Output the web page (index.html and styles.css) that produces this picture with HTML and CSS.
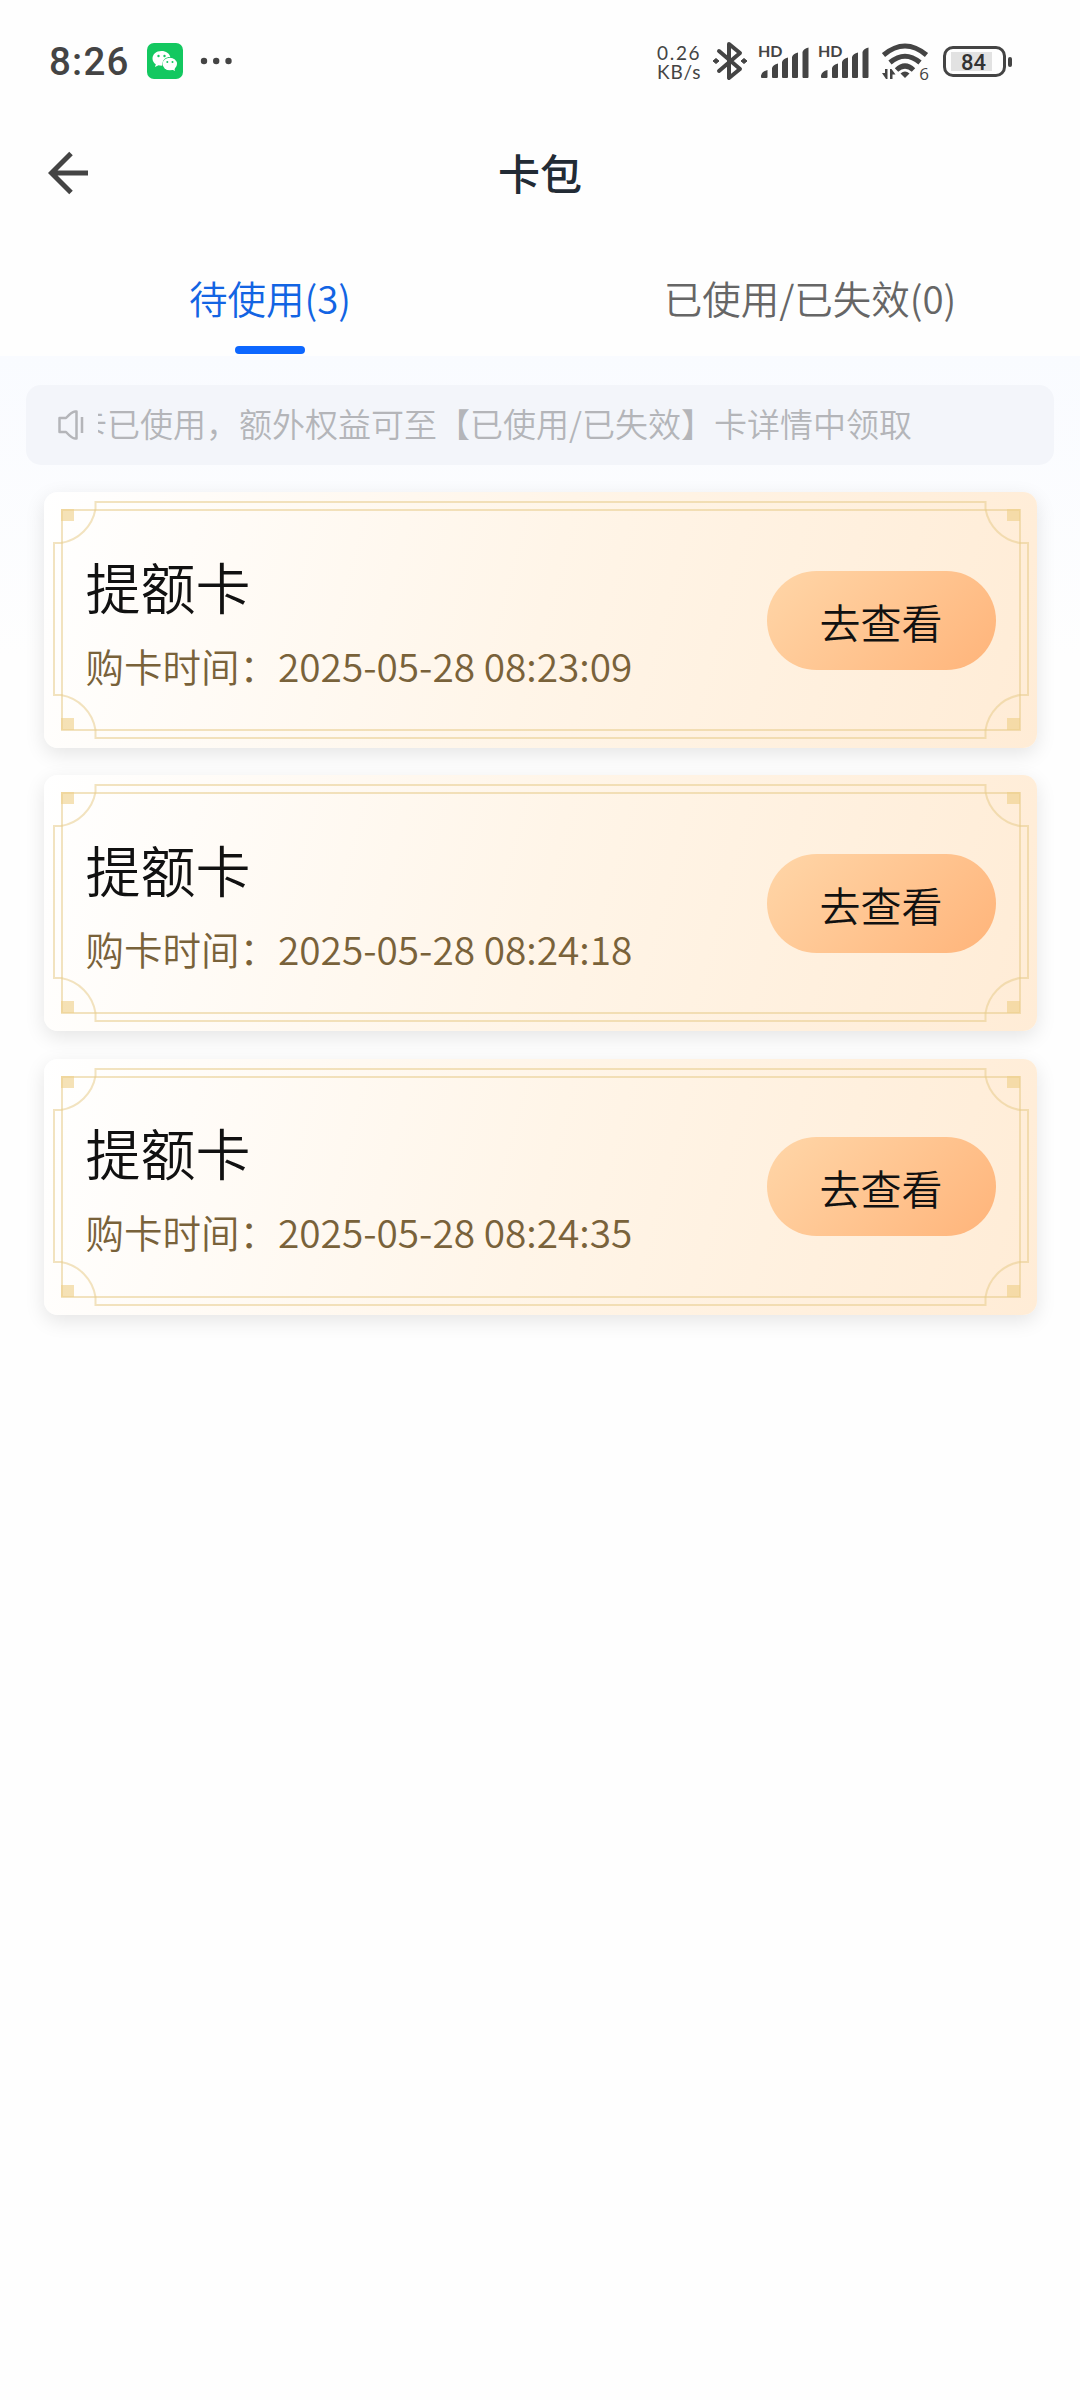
FILE: index.html
```html
<!DOCTYPE html>
<html lang="zh-CN">
<head>
<meta charset="utf-8">
<title>卡包</title>
<link rel="stylesheet" href="styles.css">
</head>
<body>
<svg class="defs" width="0" height="0" aria-hidden="true">
  <symbol id="frame" viewBox="0 0 993 256">
    <g fill="none" stroke="#e8cc8c" stroke-opacity=".55" stroke-width="2">
      <rect x="18" y="18" width="958" height="220"/>
      <path d="M51.500 10H941.500V17A42 42 0 0 0 976 51H984V203H976A42 42 0 0 0 941.500 238V246H51.500V238A42 42 0 0 0 17 203H10V51H17A42 42 0 0 0 51.500 17Z"/>
    </g>
    <path fill="#efcf87" fill-opacity=".6" d="M17 17h13v12H17zM963 17h13v12h-13zM17 226h13v12H17zM963 226h13v12h-13z"/>
  </symbol>
  <symbol id="signal" viewBox="0 0 48 31">
    <path d="M0 30v-1.500Q1 24 6.500 23V30q0 1-1 1H1q-1 0-1-1zM11 30V21q1-3.500 6-4.500V30q0 1-1 1h-4q-1 0-1-1zM21 30V15q1-3.500 6-4.500V30q0 1-1 1h-4q-1 0-1-1zM31 30V10q1-3.500 6-4.500V30q0 1-1 1h-4q-1 0-1-1zM41.500 30V5q1-3.500 6-4.500V30q0 1-1 1h-4q-1 0-1-1z"/>
  </symbol>
</svg>
<header class="status">
  <time class="clock">8:26</time>
  <svg class="wechat" viewBox="0 0 36 36" width="36" height="36">
    <rect width="36" height="36" rx="7" fill="#13c860"/>
    <path fill="#fff" d="M14.500 8C9 8 5.500 11.500 5.500 15.500c0 2.500 1.300 4.500 3.300 5.800L8 24l3.500-1.800c1 .3 2.500.5 3.800.4C15 16.500 19 14 23.300 14 22.500 10.500 19 8 14.500 8z"/>
    <ellipse cx="22.800" cy="21" rx="7.200" ry="6.300" fill="#fff"/><path fill="#fff" d="M24 26l4 2-1-4z"/>
    <g fill="#13c860"><circle cx="11.500" cy="13" r="1.200"/><circle cx="17.500" cy="13" r="1.200"/><circle cx="20.300" cy="19" r="1"/><circle cx="25.500" cy="19" r="1"/></g>
  </svg>
  <svg class="dots" viewBox="0 0 32 8" width="32" height="8"><circle cx="4" cy="4" r="3.200"/><circle cx="16.200" cy="4" r="3.200"/><circle cx="28.500" cy="4" r="3.200"/></svg>
  <div class="rate"><span class="num">0.26</span><span>KB/s</span></div>
  <svg class="bt" viewBox="0 0 36 40" width="36" height="40"><path d="M7 10 28 28 17 37V3L28 12 7 30" fill="none" stroke="#444" stroke-width="4" stroke-linejoin="round" stroke-linecap="round"/><path d="M1 20l3-2.500 3 2.500-3 2.500zM29 20l3-2.500 3 2.500-3 2.500z" stroke="#444" stroke-linejoin="round"/></svg>
  <div class="sim"><span>HD</span><svg width="48" height="31"><use href="#signal"/></svg></div>
  <div class="sim second"><span>HD</span><svg width="48" height="31"><use href="#signal"/></svg></div>
  <div class="wifi">
    <svg viewBox="0 0 48 36" width="48" height="36"><g fill="none" stroke="#444" stroke-width="5"><path d="M1.500 12Q23 -6 44.500 12"/><path d="M8 19.500Q23 7 38 19.500"/><path d="M14.500 27Q23 19 31.500 27"/></g><path d="M18.500 30.500q4.500-4 9 0L23 35z"/><path d="M0 30h3v-4h2.500v10H4zM8 36V26h1.500l4 5.500h-3V36z"/></svg>
    <span>6</span>
  </div>
  <div class="battery"><span>84</span></div>
</header>
<nav class="titlebar">
  <svg class="back" viewBox="0 0 40 44" width="40" height="44"><path d="M23 2.500 3.500 22 23 41.500M4 22h36" fill="none" stroke="#444" stroke-width="5"/></svg>
  <h1>卡包</h1>
</nav>
<div class="tabs">
  <div class="tab active">待使用(3)</div>
  <div class="tab">已使用/已失效(0)</div>
</div>
<main>
  <div class="notice">
    <svg class="horn" viewBox="0 0 26 30" width="26" height="30"><path d="M1.500 8h6.500q6-6.500 9-6.500h1.500v27H17q-3 0-9-6.500H1.500zM24 7v16" fill="none" stroke="#b4b5b9" stroke-width="2.500" stroke-linejoin="round"/></svg>
    <div class="ticker"><span>卡已使用，额外权益可至【已使用/已失效】卡详情中领取</span></div>
  </div>
  <section class="card">
    <svg class="frame"><use href="#frame"/></svg>
    <div class="info"><h2>提额卡</h2><p>购卡时间：<span>2025-05-28 08:23:09</span></p></div>
    <button>去查看</button>
  </section>
  <section class="card">
    <svg class="frame"><use href="#frame"/></svg>
    <div class="info"><h2>提额卡</h2><p>购卡时间：<span>2025-05-28 08:24:18</span></p></div>
    <button>去查看</button>
  </section>
  <section class="card">
    <svg class="frame"><use href="#frame"/></svg>
    <div class="info"><h2>提额卡</h2><p>购卡时间：<span>2025-05-28 08:24:35</span></p></div>
    <button>去查看</button>
  </section>
</main>
</body>
</html>
```
FILE: styles.css
```css
* { box-sizing: border-box; }
body { margin: 0; width: 1080px; height: 2400px; background: #fefefe; font-family: "Noto Sans CJK SC", sans-serif; font-weight: 350; color: #111; overflow: hidden; }
h1, h2, p { margin: 0; }
.defs { display: block; height: 0; }
.status { height: 122px; padding: 0 65px 0 49px; display: flex; align-items: center; color: #444; fill: #444; font-family: Inter, sans-serif; }
.clock { font: 500 38.500px/46px Roboto, sans-serif; letter-spacing: 1.200px; width: 98px; padding-top: 2px; }
.dots { margin-left: 17px; }
.rate { display: flex; flex-direction: column; margin-left: 425px; font: 400 19px/19px Lato, sans-serif; width: 47px; letter-spacing: .8px; padding-top: 1px; }
.rate .num { letter-spacing: 1.700px; }
.bt { margin-left: 8px; }
.sim { position: relative; margin-left: 13px; padding-top: 3px; height: 34px; width: 48px; }
.sim.second { margin-left: 12px; }
.sim svg { display: block; }
.sim span { position: absolute; left: -3px; top: -1px; font: 700 16px/16px Lato, sans-serif; }
.wifi { position: relative; margin-left: 13px; width: 48px; height: 36px; }
.wifi span { position: absolute; right: 1px; bottom: -3px; font: 400 17px/17px "Open Sans", sans-serif; }
.battery { position: relative; margin-left: 13px; width: 63px; height: 31px; border: 3px solid #444; border-radius: 10px; padding: 3px 11px 3px 5px; }
.battery span { display: block; padding-left: 10px; background: #e2e2e2; color: #333; font: 500 22px/21px Roboto, sans-serif; height: 19px; }
.battery::after { content: ""; position: absolute; right: -9px; top: 8px; width: 4px; height: 10px; border-radius: 2px; background: #444; }
.titlebar { height: 103px; display: grid; grid-template-columns: 100px 1fr 100px; align-items: center; }
.back { margin-left: 48px; margin-top: -1px; }
h1 { text-align: center; font-size: 42px; font-weight: 500; line-height: 60px; padding-bottom: 4px; color: #222b35; }
.tabs { height: 131px; display: grid; grid-template-columns: 1fr 1fr; }
.tab { position: relative; padding-top: 44px; text-align: center; font-size: 38.500px; line-height: 56px; color: #666; }
.tab.active { color: #1264e3; }
.tab.active::after { content: ""; position: absolute; left: 235px; bottom: 2px; width: 70px; height: 8px; border-radius: 4px; background: #0d67ff; }
main { display: flex; flex-direction: column; align-items: center; padding-top: 29px; background: linear-gradient(#f9fbff, #fefefe 300px); }
.notice { width: 1028px; height: 80px; border-radius: 15px; background: #f3f5fa; display: flex; align-items: center; padding-left: 32px; color: #b4b5b9; }
.ticker { margin-left: 14px; width: 880px; overflow: hidden; white-space: nowrap; font-size: 33px; line-height: 48px; padding-bottom: 4px; }
.ticker span { display: block; margin-left: -24px; }
.card { position: relative; width: 993px; height: 256px; margin-top: 27px; padding: 0 41px 0 42px; border-radius: 14px; display: flex; align-items: center; justify-content: space-between; background: linear-gradient(105deg, #fff, #fff5e8 50%, #ffecd6); box-shadow: 0 6px 20px rgba(0, 0, 0, .1); }
.card + .card { margin-top: 27.300px; }
.frame { position: absolute; inset: 0; width: 993px; height: 256px; }
.info { position: relative; padding-bottom: 3px; }
h2 { font-size: 55px; line-height: 80px; font-weight: 350; }
.info p { font-size: 38.500px; line-height: 56px; margin-top: 12px; color: #79623a; }
.info p span { font-size: 38.800px; }
button { position: relative; width: 229px; height: 99px; padding: 1px 0 0; border: 0; border-radius: 50px; background: linear-gradient(135deg, #ffd6a8, #ffb47a); font: inherit; font-size: 41px; color: #111; }
```
